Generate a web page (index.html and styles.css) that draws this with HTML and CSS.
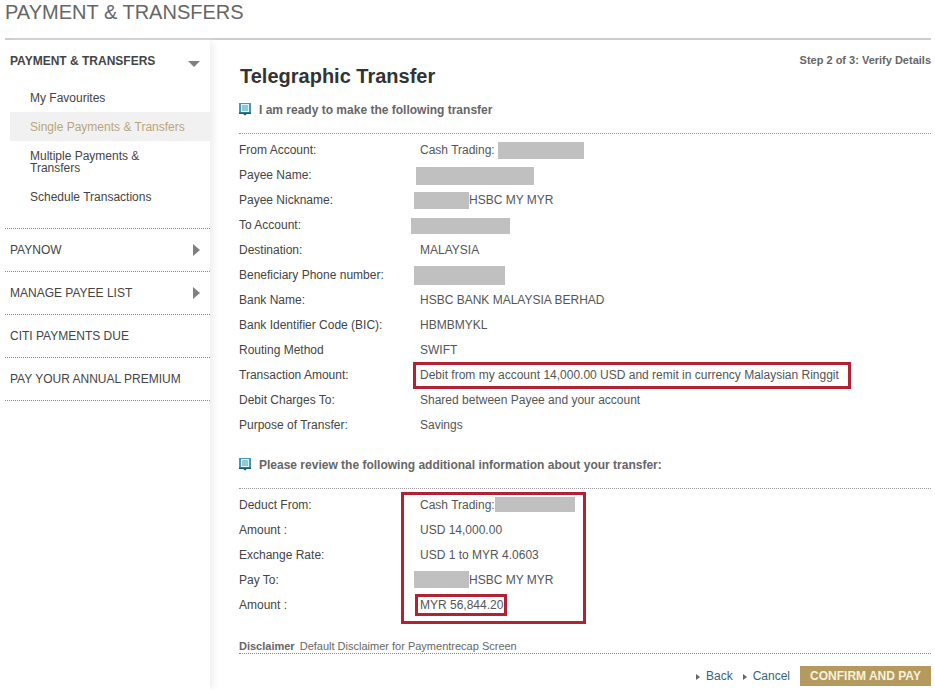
FILE: index.html
```html
<!DOCTYPE html>
<html lang="en">
<head>
    <meta charset="UTF-8">
    <meta name="viewport" content="width=device-width, initial-scale=1.0">
    <title>Payment &amp; Transfers</title>
    <link rel="stylesheet" href="styles.css">
</head>
<body>
    <!-- Page title -->
    <div class="page-title">PAYMENT &amp; TRANSFERS</div>

    <div class="layout">
        <!-- Side menu -->
        <div class="sidebar">
            <div class="menu-open">
                <div class="menu-head">
                    <span>PAYMENT &amp; TRANSFERS</span>
                    <span class="arrow-down"></span>
                </div>
                <div class="sub-item">My Favourites</div>
                <div class="sub-item active">Single Payments &amp; Transfers</div>
                <div class="sub-item">Multiple Payments &amp;<br>Transfers</div>
                <div class="sub-item">Schedule Transactions</div>
            </div>
            <div class="menu-item">PAYNOW <span class="arrow-right"></span></div>
            <div class="menu-item">MANAGE PAYEE LIST <span class="arrow-right"></span></div>
            <div class="menu-item">CITI PAYMENTS DUE</div>
            <div class="menu-item">PAY YOUR ANNUAL PREMIUM</div>
        </div>

        <!-- Main content -->
        <div class="main">
            <div class="step">Step 2 of 3: Verify Details</div>
            <h1>Telegraphic Transfer</h1>

            <div class="section-head">
                <svg class="note-icon" viewBox="0 0 12 13" width="12" height="13"><path d="M0 0H12V11H7.500L6 12.500 4.500 11H0Z" fill="#3f9db5"/><path d="M0 9.500H12V11H7.500L6 12.500 4.500 11H0Z" fill="#1c5a70"/><path d="M2 1H10V9H2Z" fill="#e4f3f6"/><path d="M3 3H9M3 5H9M3 7H9" stroke="#3f9db5"/></svg>
                I am ready to make the following transfer
            </div>

            <div class="rows">
                <div class="row"><div class="label">From Account:</div><div class="value"><span class="text">Cash Trading:</span><span class="mask mask-from"></span></div></div>
                <div class="row"><div class="label">Payee Name:</div><div class="value"><span class="mask mask-payee"></span></div></div>
                <div class="row"><div class="label">Payee Nickname:</div><div class="value"><span class="mask mask-nick"></span>HSBC MY MYR</div></div>
                <div class="row"><div class="label">To Account:</div><div class="value"><span class="mask mask-to"></span></div></div>
                <div class="row"><div class="label">Destination:</div><div class="value"><span class="text">MALAYSIA</span></div></div>
                <div class="row"><div class="label">Beneficiary Phone number:</div><div class="value"><span class="mask mask-phone"></span></div></div>
                <div class="row"><div class="label">Bank Name:</div><div class="value"><span class="text">HSBC BANK MALAYSIA BERHAD</span></div></div>
                <div class="row"><div class="label">Bank Identifier Code (BIC):</div><div class="value"><span class="text">HBMBMYKL</span></div></div>
                <div class="row"><div class="label">Routing Method</div><div class="value"><span class="text">SWIFT</span></div></div>
                <div class="row"><div class="label">Transaction Amount:</div><div class="value"><span class="text red-wide">Debit from my account 14,000.00 USD and remit in currency Malaysian Ringgit</span></div></div>
                <div class="row"><div class="label">Debit Charges To:</div><div class="value"><span class="text">Shared between Payee and your account</span></div></div>
                <div class="row"><div class="label">Purpose of Transfer:</div><div class="value"><span class="text">Savings</span></div></div>
            </div>

            <div class="section-head second">
                <svg class="note-icon" viewBox="0 0 12 13" width="12" height="13"><path d="M0 0H12V11H7.500L6 12.500 4.500 11H0Z" fill="#3f9db5"/><path d="M0 9.500H12V11H7.500L6 12.500 4.500 11H0Z" fill="#1c5a70"/><path d="M2 1H10V9H2Z" fill="#e4f3f6"/><path d="M3 3H9M3 5H9M3 7H9" stroke="#3f9db5"/></svg>
                Please review the following additional information about your transfer:
            </div>

            <div class="review">
                <div class="review-labels">
                    <div class="label">Deduct From:</div>
                    <div class="label">Amount :</div>
                    <div class="label">Exchange Rate:</div>
                    <div class="label">Pay To:</div>
                    <div class="label">Amount :</div>
                </div>
                <div class="review-box">
                    <div class="value"><span class="text">Cash Trading:</span><span class="mask mask-deduct"></span></div>
                    <div class="value"><span class="text">USD 14,000.00</span></div>
                    <div class="value"><span class="text">USD 1 to MYR 4.0603</span></div>
                    <div class="value"><span class="mask mask-payto"></span>HSBC MY MYR</div>
                    <div class="value"><span class="text red-small">MYR 56,844.20</span></div>
                </div>
            </div>

            <div class="disclaimer"><strong>Disclaimer</strong> Default Disclaimer for Paymentrecap Screen</div>

            <div class="actions">
                <a class="link"><span class="arrow-small"></span>Back</a>
                <a class="link"><span class="arrow-small"></span>Cancel</a>
                <button class="confirm">CONFIRM AND PAY</button>
            </div>
        </div>
    </div>
</body>
</html>
```

FILE: styles.css
```css
/* Basic page styles */
body {
    margin: 0;
    background-color: #fff;
    font-family: "Liberation Sans", Arial, sans-serif;
    font-size: 12px;
    color: #444;
}
.page-title {
    margin: 0 4px 0 5px;
    height: 38px;
    border-bottom: 2px solid #ccc;
    font-size: 20px;
    line-height: 25px;
    color: #666;
}
.layout {
    display: flex;
    margin-left: 5px;
    width: 926px;
}

/* Side menu */
.sidebar {
    width: 205px;
    height: 650px;
    flex-shrink: 0;
    box-shadow: 6px 0 6px -2px #f0f0f0;
}
.menu-open {
    height: 188px;
    border-bottom: 1px dotted #888;
}
.menu-head {
    display: flex;
    justify-content: space-between;
    align-items: center;
    padding: 12px 10px 0 5px;
    height: 18px;
    font-weight: bold;
    color: #444;
}
.arrow-down {
    margin-top: 5px;
    border-left: 6px solid transparent;
    border-right: 6px solid transparent;
    border-top: 6px solid #808080;
}
.sub-item {
    display: flex;
    align-items: center;
    margin-left: 5px;
    padding-left: 20px;
    min-height: 29px;
    line-height: 12px;
    color: #444;
}
.menu-head + .sub-item {
    margin-top: 13px;
}
.sub-item.active {
    background-color: #f1f1f1;
    color: #b8a67e;
}
.sub-item:nth-child(4) {
    min-height: 40px;
    padding-top: 1px;
}
.menu-item {
    display: flex;
    justify-content: space-between;
    align-items: center;
    height: 42px;
    padding: 0 10px 0 5px;
    border-bottom: 1px dotted #888;
    color: #444;
}
.arrow-right {
    border-top: 6px solid transparent;
    border-bottom: 6px solid transparent;
    border-left: 7px solid #808080;
}

/* Main content */
.main {
    flex: 1;
    margin-left: 29px;
}
.step {
    margin-top: 14px;
    height: 14px;
    text-align: right;
    font-size: 11px;
    font-weight: bold;
    color: #666;
}
h1 {
    margin: -4px 0 0 1px;
    font-size: 20px;
    line-height: 24px;
    color: #333;
}
.section-head {
    display: flex;
    align-items: center;
    gap: 8px;
    height: 21px;
    margin-top: 11px;
    padding-bottom: 13px;
    border-bottom: 1px dotted #999;
    font-weight: bold;
    color: #666;
}
.section-head.second {
    margin-top: 16px;
}
.rows {
    padding-top: 4px;
}
.row {
    display: flex;
}
.label {
    height: 25px;
    line-height: 25px;
    color: #444;
}
.row .label {
    width: 172px;
    flex-shrink: 0;
}
.value {
    display: flex;
    align-items: center;
    height: 25px;
    line-height: 25px;
    color: #555;
}
.text {
    margin-left: 9px;
}

/* Greyed-out account details */
.mask {
    display: block;
    height: 17px;
    background-color: #c0c0c0;
}
.mask-from {
    width: 86px;
    margin-left: 3px;
}
.mask-payee {
    width: 118px;
    height: 18px;
    margin-left: 5px;
}
.mask-nick {
    width: 55px;
    margin-left: 3px;
}
.mask-to {
    width: 99px;
    height: 16px;
}
.mask-phone {
    width: 91px;
    height: 19px;
    margin-left: 3px;
}

/* Red highlight boxes */
.red-wide {
    margin-left: 2px;
    padding: 0 9px 0 4px;
    line-height: 21px;
    border: 3px solid #b22234;
}
.review {
    display: flex;
    padding-top: 3px;
}
.review-labels {
    width: 162px;
    padding-top: 1px;
}
.review-box {
    width: 179px;
    height: 126px;
    border: 3px solid #b22234;
}
.review-box .value:first-child {
    margin-top: -2px;
}
.review-box .text {
    margin-left: 16px;
}
.mask-deduct {
    width: 80px;
    height: 15px;
    margin-top: -2px;
}
.mask-payto {
    width: 55px;
    margin-left: 10px;
    margin-top: -2px;
}
.review-box .red-small {
    margin-left: 11px;
    margin-top: -2px;
    padding: 0 1px 0 2px;
    line-height: 16px;
    border: 3px solid #b22234;
}
.disclaimer {
    height: 14px;
    margin-top: 15px;
    line-height: 15px;
    font-size: 11px;
    border-bottom: 1px dotted #888;
    color: #666;
}
.disclaimer strong {
    margin-right: 2px;
}
.actions {
    display: flex;
    justify-content: flex-end;
    align-items: center;
    margin-top: 12px;
}
.link {
    margin-right: 10px;
    color: #3d5f73;
}
.arrow-small {
    display: inline-block;
    margin-right: 6px;
    border-top: 3px solid transparent;
    border-bottom: 3px solid transparent;
    border-left: 4px solid #666;
}
.confirm {
    width: 131px;
    height: 20px;
    padding: 0;
    border: none;
    background-color: #b59a60;
    color: #f8f1d8;
    font-family: inherit;
    font-size: 12px;
    font-weight: bold;
}
```
